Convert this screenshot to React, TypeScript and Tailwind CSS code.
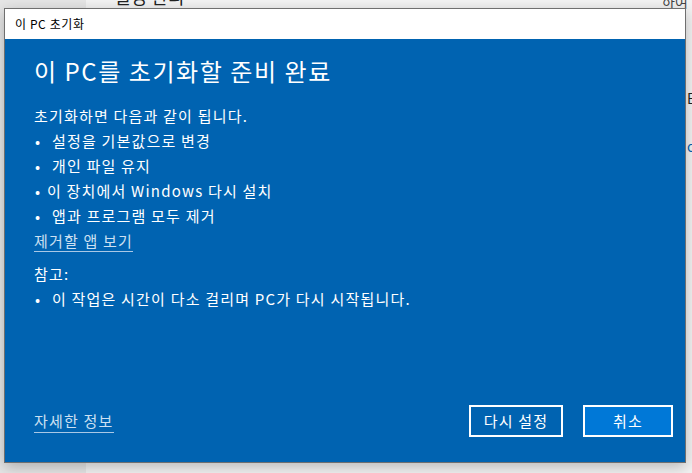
import React from "react";

const font = { fontFamily: '"Noto Sans CJK KR", "Noto Sans", sans-serif' };

function Bullet({ children, tight }: { children: React.ReactNode; tight?: boolean }) {
  return (
    <div className="flex h-[25px] items-center">
      <span className={tight ? "w-[13px] pl-[1px]" : "w-[18px] pl-[1px]"}>•</span>
      <span>{children}</span>
    </div>
  );
}

export default function App() {
  return (
    <div className="relative h-[473px] w-[692px] overflow-hidden bg-[#f2f2f2]" style={font}>
      {/* background settings window */}
      <div className="flex h-full w-full">
        <div className="h-full w-[86px] bg-[#e6e6e6]" />
        <div className="relative h-full flex-1 bg-[#f3f3f3]">
          <div className="absolute left-[28px] top-[-17px] text-[18px] text-[#222]">설정 관리</div>
          <div className="absolute left-[576px] top-[-9px] text-[14px] text-[#444]">하여</div>
          <div className="absolute left-[601px] top-[88px] text-[14px] text-[#222]">E</div>
          <div className="absolute left-[601px] top-[136px] text-[14px] text-[#0063b1]">o</div>
        </div>
      </div>

      {/* dialog */}
      <div className="absolute left-[4px] top-[8px] flex h-[455px] w-[682px] flex-col border border-[#6f6f6f] bg-[#0063b1] shadow-[0_4px_14px_rgba(0,0,0,0.25)]">
        <div className="flex h-[30px] items-center bg-white pl-[10px] text-[12px] tracking-[0.05em] text-black">이 PC 초기화</div>
        <div className="flex flex-1 flex-col px-[29px] text-white">
          <div className="mt-[14px] text-[24px] leading-[36px] tracking-[0.065em]">이 PC를 초기화할 준비 완료</div>
          <div className="mt-[14px] text-[15px] leading-[25px] tracking-[0.08em]">
            <div className="h-[25px]">초기화하면 다음과 같이 됩니다.</div>
            <Bullet>설정을 기본값으로 변경</Bullet>
            <Bullet>개인 파일 유지</Bullet>
            <Bullet tight>이 장치에서 Windows 다시 설치</Bullet>
            <Bullet>앱과 프로그램 모두 제거</Bullet>
            <div className="h-[25px]">
              <span className="border-b border-[#a9c8e6] text-[#cde0f2]">제거할 앱 보기</span>
            </div>
            <div className="mt-[8px] h-[25px]">참고:</div>
            <Bullet>이 작업은 시간이 다소 걸리며 PC가 다시 시작됩니다.</Bullet>
          </div>
          <div className="mt-auto mb-[25px] flex items-center justify-between text-[15px] tracking-[0.08em]">
            <span className="border-b border-[#a9c8e6] leading-[22px] text-[#cde0f2]">자세한 정보</span>
            <div className="flex gap-[20px] mr-[-17px]">
              <button className="flex h-[32px] w-[94px] items-center justify-center border-2 border-white text-white">다시 설정</button>
              <button className="flex h-[32px] w-[90px] items-center justify-center border-2 border-white bg-[#0078d7] text-white">취소</button>
            </div>
          </div>
        </div>
      </div>
    </div>
  );
}
